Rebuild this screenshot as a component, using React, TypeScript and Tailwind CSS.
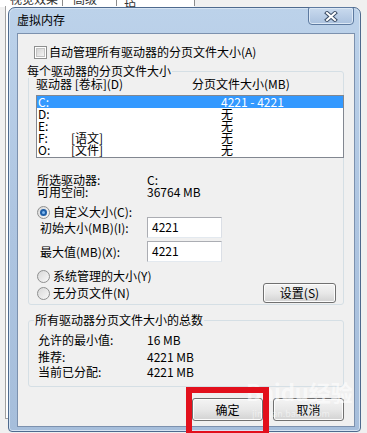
import React from "react";

function Checkbox() {
  return (
    <span className="flex h-[13px] w-[13px] shrink-0 items-center justify-center border border-[#8e8f8f] bg-white">
      <span className="h-[9px] w-[9px] border border-[#c4c4c4] bg-linear-to-br from-[#d4d4d4] to-[#f4f4f4]" />
    </span>
  );
}

function Radio({ checked }: { checked?: boolean }) {
  return (
    <span className="flex h-[13px] w-[13px] shrink-0 items-center justify-center rounded-full border border-[#8e8f8f] bg-linear-to-br from-[#d8d8d8] to-[#f8f8f8]">
      {checked ? (
        <span className="flex h-[7px] w-[7px] items-center justify-center rounded-full bg-[#1f5fa8]">
          <span className="h-[3px] w-[3px] rounded-full bg-[#7fb8ef]" />
        </span>
      ) : null}
    </span>
  );
}

function Btn({ label, className }: { label: string; className?: string }) {
  return (
    <div
      className={
        "flex items-center justify-center rounded-[3px] border border-[#707070] bg-linear-to-b from-[#f4f4f4] via-[#e8e8e8] to-[#d2d2d2] shadow-[inset_0_0_0_1px_#fcfcfc] " +
        (className ?? "")
      }
    >
      {label}
    </div>
  );
}

function InputBox({ value }: { value: string }) {
  return (
    <div className="flex h-[21px] w-[75px] items-center border border-[#abadb3] border-b-[#e3e9ef] border-r-[#dbdfe6] bg-white pl-[4px] pb-[2px]">
      {value}
    </div>
  );
}

const rows = [
  { d: "C:", l: "", s: "4221 - 4221", sel: true },
  { d: "D:", l: "", s: "无" },
  { d: "E:", l: "", s: "无" },
  { d: "F:", l: "[语文]", s: "无" },
  { d: "O:", l: "[文件]", s: "无" },
];

export default function App() {
  return (
    <div className="relative h-[433px] w-[367px] overflow-hidden bg-[#f0f0f0] font-['Noto_Sans_CJK_SC','Noto_Sans',sans-serif] text-[12px] leading-[14px] text-black">
      {/* background window behind the dialog */}
      <div className="absolute left-0 top-0 h-[7px] w-[194px] bg-white" />
      <div className="absolute left-[5px] top-[6px] h-[413px] w-[100px] border-b border-l border-[#a0a0a0] bg-white" />
      <div className="absolute left-0 top-[-8px] flex h-[14px] items-center text-[12px] text-[#333]">
        <span className="ml-[10px] w-[52px]">视觉效果</span>
        <span className="h-[14px] w-px bg-[#8c8c8c]" />
        <span className="ml-[10px] w-[43px]">高级</span>
        <span className="h-[14px] w-px bg-[#8c8c8c]" />
        <span className="ml-[7px] w-[70px]">数据执行保护</span>
        <span className="h-[14px] w-px bg-[#8c8c8c]" />
      </div>

      {/* dialog window */}
      <div className="absolute left-[8px] top-[7px] flex h-[425px] w-[353px] flex-col rounded-t-[7px] rounded-b-[4px] border border-[#4e6a8e] bg-linear-to-b from-[#bcd2ea] via-[#aec5e1] to-[#a6bedb] pb-[4px] pl-[8px] pr-[5px] shadow-[inset_0_0_0_1px_#d6e4f3]">
        <div className="flex h-[25px] items-center pb-[1px] text-[12px] text-black">虚拟内存</div>

        {/* close button */}
        <div className="absolute left-[299px] top-[-1px] flex h-[18px] w-[46px] items-center justify-center rounded-b-[4px] rounded-t-[2px] border border-[#5d7aa0] bg-linear-to-b from-[#c9daee] to-[#aac1de] shadow-[inset_0_0_0_1px_#dce8f5]">
          <svg width="14" height="11" viewBox="0 0 14 11">
            <path d="M3 2 L11 9 M11 2 L3 9" stroke="#3d4f68" strokeWidth="4" strokeLinecap="square" />
            <path d="M3 2 L11 9 M11 2 L3 9" stroke="#ffffff" strokeWidth="2" strokeLinecap="square" />
          </svg>
        </div>

        {/* client area */}
        <div className="flex flex-1 flex-col border border-[#7c91ae] bg-[#f0f0f0] pl-[10px]">
          <div className="mt-[11px] flex h-[14px] items-center pl-[6px]">
            <Checkbox />
            <span className="ml-[2px]">自动管理所有驱动器的分页文件大小(A)</span>
          </div>

          {/* group 1 */}
          <div className="relative mt-[12px] w-[316px] rounded-[3px] border border-[#d5dfe5] pt-[5px]">
            <span className="absolute left-[-2px] top-[-8px] bg-[#f0f0f0] pr-[1px]">每个驱动器的分页文件大小</span>
            <div className="flex h-[14px] items-center pl-[7px]">
              <span className="w-[156px]">驱动器 [卷标](D)</span>
              <span>分页文件大小(MB)</span>
            </div>
            <div className="ml-[7px] mt-[4px] h-[63px] w-[308px] border border-[#828790] bg-white">
              {rows.map((r) => (
                <div
                  key={r.d}
                  className={
                    "flex h-[12px] items-center leading-[12px] " +
                    (r.sel ? "bg-[#3399ff] text-white" : "text-black")
                  }
                >
                  <span className="w-[34px] pl-[1px]">{r.d}</span>
                  <span className="w-[150px]">{r.l}</span>
                  <span>{r.s}</span>
                </div>
              ))}
            </div>

            <div className="mt-[16px] flex h-[12px] items-center pl-[8px]">
              <span className="w-[110px]">所选驱动器:</span>
              <span>C:</span>
            </div>
            <div className="flex h-[12px] items-center pl-[8px]">
              <span className="w-[110px]">可用空间:</span>
              <span>36764 MB</span>
            </div>

            <div className="mt-[9px] flex h-[10px] items-center pl-[8px]">
              <Radio checked />
              <span className="ml-[3px]">自定义大小(C):</span>
            </div>
            <div className="flex h-[21px] items-center pl-[11px]">
              <span className="w-[107px]">初始大小(MB)(I):</span>
              <InputBox value="4221" />
            </div>
            <div className="mt-[3px] flex h-[21px] items-center pl-[11px]">
              <span className="w-[107px]">最大值(MB)(X):</span>
              <InputBox value="4221" />
            </div>

            <div className="mt-[8px] flex h-[12px] items-center pl-[8px]">
              <Radio />
              <span className="ml-[3px]">系统管理的大小(Y)</span>
            </div>
            <div className="flex h-[22px] items-center pl-[8px] pr-[7px]">
              <Radio />
              <span className="ml-[3px]">无分页文件(N)</span>
              <Btn label="设置(S)" className="ml-auto h-[20px] w-[73px]" />
            </div>
          </div>

          {/* group 2 */}
          <div className="relative mt-[15px] w-[316px] rounded-[3px] border border-[#d5dfe5] pb-[7px] pt-[12px]">
            <span className="absolute left-[5px] top-[-8px] bg-[#f0f0f0] px-[1px]">所有驱动器分页文件大小的总数</span>
            <div className="flex h-[14px] items-center pl-[9px]">
              <span className="w-[109px]">允许的最小值:</span>
              <span>16 MB</span>
            </div>
            <div className="mt-[3px] flex h-[14px] items-center pl-[9px]">
              <span className="w-[109px]">推荐:</span>
              <span>4221 MB</span>
            </div>
            <div className="mt-[1px] flex h-[14px] items-center pl-[9px]">
              <span className="w-[109px]">当前已分配:</span>
              <span>4221 MB</span>
            </div>
          </div>

          <div className="mt-[11px] flex justify-end gap-[10px] pr-[10px]">
            <Btn label="确定" className="h-[23px] w-[71px]" />
            <Btn label="取消" className="h-[23px] w-[71px]" />
          </div>
        </div>
      </div>

      {/* watermark */}
      <div className="pointer-events-none absolute left-[246px] top-[378px] text-[22px] font-bold leading-[26px] text-white/60">
        Baidu经验
      </div>
      <div className="pointer-events-none absolute left-[252px] top-[409px] text-[9px] leading-[10px] text-white/50">
        jingyan.baidu.com
      </div>

      {/* red highlight */}
      <div className="pointer-events-none absolute left-[186px] top-[387px] h-[50px] w-[83px] border-[6px] border-[#e2101c]" />
    </div>
  );
}
